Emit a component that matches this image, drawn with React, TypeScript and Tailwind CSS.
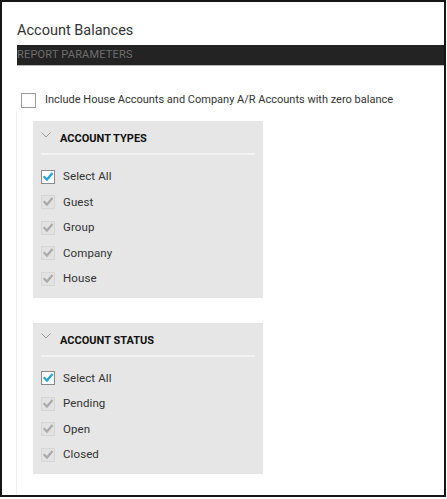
import React from "react";

const font = { fontFamily: "Roboto, 'Liberation Sans', sans-serif" };

function Check({ color }: { color: string }) {
  return (
    <svg viewBox="0 0 14 14" className="w-[14px] h-[14px]">
      <path d="M2.8 7 L5.8 10 L11.4 3.4" fill="none" stroke={color} strokeWidth="2.6" strokeLinecap="square" />
    </svg>
  );
}

function Box({ state }: { state: "empty" | "checked" | "disabled" }) {
  if (state === "empty")
    return <span className="block w-[15px] h-[15px] border border-[#9a9a9a] bg-white" />;
  if (state === "checked")
    return (
      <span className="flex items-center justify-center w-[14px] h-[14px] border border-[#8a8a8a] bg-white">
        <Check color="#22a7dd" />
      </span>
    );
  return (
    <span className="flex items-center justify-center w-[14px] h-[14px] border border-[#d6d6d6] bg-[#e2e2e2]">
      <Check color="#ababab" />
    </span>
  );
}

function Panel({ title, items }: { title: string; items: string[] }) {
  return (
    <div className="w-[230px] bg-[#e6e6e6] px-[8px] pt-[9px] pb-[6px]">
      <div className="flex items-center h-[17px]">
        <svg viewBox="0 0 10 6" className="w-[10px] h-[6px] -translate-y-[4px]">
          <path d="M0.5 0.5 L5 5 L9.5 0.5" fill="none" stroke="#9a9a9a" strokeWidth="1" />
        </svg>
        <span className="ml-[9px] text-[11px] font-bold text-[#111] leading-[17px]">{title}</span>
      </div>
      <div className="mt-[6px] h-[2px] bg-[#f3f3f3]" />
      <div className="pt-[9px]">
        {["Select All", ...items].map((it, i) => (
          <div key={it} className="flex items-center h-[25.5px]">
            <Box state={i === 0 ? "checked" : "disabled"} />
            <span className="ml-[8px] text-[11.5px] tracking-[0.1px] text-[#333]">{it}</span>
          </div>
        ))}
      </div>
    </div>
  );
}

export default function App() {
  return (
    <div
      style={font}
      className="w-[446px] h-[497px] border-l-2 border-t-2 border-b-2 border-r-2 border-[#161616] bg-white pl-[15px] flex flex-col"
    >
      <div className="pt-[20px] h-[38px] text-[14.5px] leading-[18px] text-[#333]">Account Balances</div>
      <div className="mt-[5px] h-[21px] bg-[#232323] border-b border-[#b5b5b5] text-[11px] tracking-[0.2px] leading-[20px] text-[#6e6e6e]">
        REPORT PARAMETERS
      </div>
      <div className="mt-[26px] h-[16px] flex items-center">
        <span className="ml-[4px]">
          <Box state="empty" />
        </span>
        <span className="ml-[9px] text-[11px] text-[#333]">
          Include House Accounts and Company A/R Accounts with zero balance
        </span>
      </div>
      <div className="mt-[4px] -ml-px flex-1 border-l border-[#f0f0f0] pl-[16px] pt-[9px]">
        <Panel title="ACCOUNT TYPES" items={["Guest", "Group", "Company", "House"]} />
        <div className="mt-[25px]">
          <Panel title="ACCOUNT STATUS" items={["Pending", "Open", "Closed"]} />
        </div>
      </div>
    </div>
  );
}
